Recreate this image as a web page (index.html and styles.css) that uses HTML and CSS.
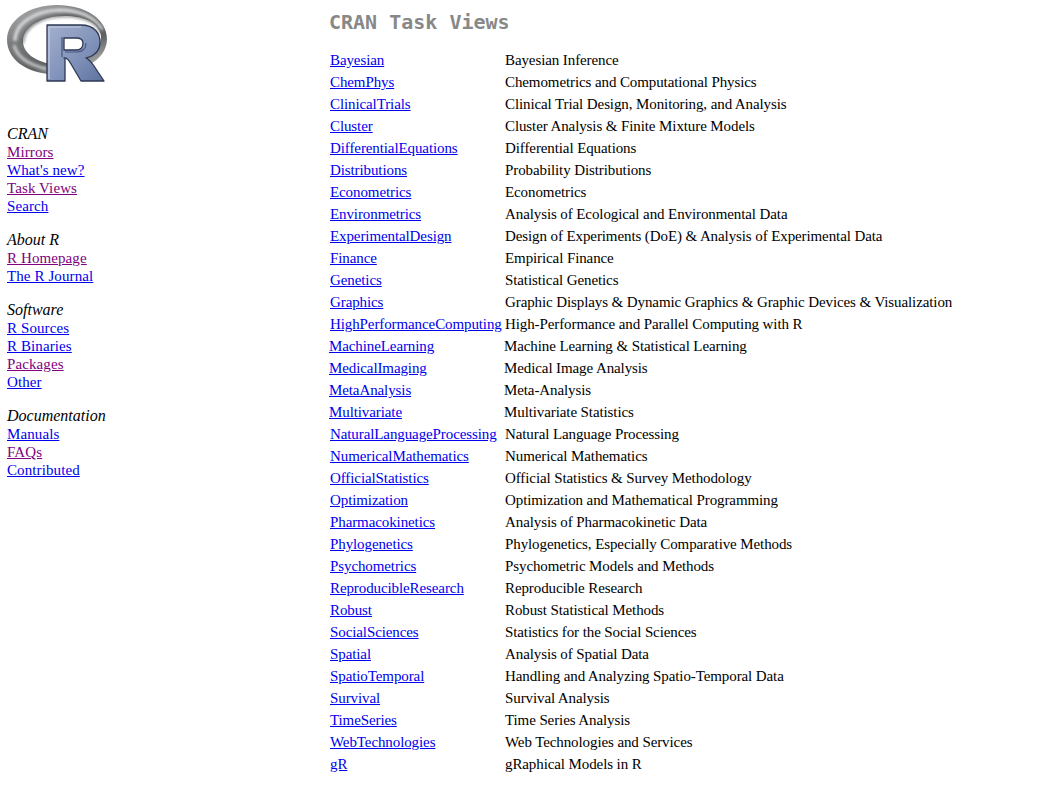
FILE: index.html
```html
<!DOCTYPE html>
<html lang="en">
<head>
    <meta charset="UTF-8">
    <title>CRAN Task Views</title>
    <link rel="stylesheet" href="styles.css">
</head>
<body>
    <div class="pagina">
        <div class="lateral">
            <svg class="logo" viewBox="0 0 100 78" width="100" height="78" role="img" aria-label="R logo">
                <defs>
                    <linearGradient id="anillo" x1="0" y1="0" x2="0.7" y2="1">
                        <stop offset="0" stop-color="#b4b5b8"/>
                        <stop offset="0.4" stop-color="#77797a"/>
                        <stop offset="0.75" stop-color="#5f6162"/>
                        <stop offset="1" stop-color="#a9abac"/>
                    </linearGradient>
                    <linearGradient id="letra" x1="0" y1="0" x2="1" y2="1">
                        <stop offset="0" stop-color="#a3b0ce"/>
                        <stop offset="0.6" stop-color="#7e90b8"/>
                        <stop offset="1" stop-color="#5d709e"/>
                    </linearGradient>
                    <filter id="suave" x="-10%" y="-10%" width="120%" height="120%">
                        <feGaussianBlur stdDeviation="1.4"/>
                    </filter>
                    <filter id="borde" x="-5%" y="-5%" width="110%" height="110%">
                        <feGaussianBlur stdDeviation="0.35"/>
                    </filter>
                </defs>
                <g filter="url(#borde)">
                    <path fill="url(#anillo)" fill-rule="evenodd" d="M50 0C22 0 0 15 0 35C0 53 18 68 44 69L44 59C28 56 16 48 16 36C16 22 34 11 58 11C80 11 94 20 94 32C94 42 87 50 76 54L82 60C93 54 100 45 100 34C100 14 78 0 50 0Z"/>
                    <path fill="none" stroke="#e4e5e6" stroke-width="3" filter="url(#suave)" d="M8 36C8 18 28 6 52 5C72 5 88 12 95 25"/>
                    <path fill="none" stroke="#dfe0e1" stroke-width="2.5" filter="url(#suave)" d="M7 40C10 52 22 60 40 64"/>
                    <path fill="none" stroke="#47494a" stroke-width="1.6" filter="url(#suave)" d="M16 38C16 22 34 11 58 11C76 11 90 17 94 28"/>
                    <path fill="url(#letra)" stroke="#2f3853" stroke-width="1.3" stroke-linejoin="round" fill-rule="evenodd" d="M40 20L74 20C88 20 93 29 93 37C93 46 87 51 79 53C83 55 85 58 87 61L97 76L74 76L64 59C61 54 60 53 57 53L58 53L58 76L40 76ZM57 33L57 45L69 45C74 45 76 42 76 38C76 35 74 33 69 33Z"/>
                    <path fill="none" stroke="#c3cde2" stroke-width="1.2" d="M42 74L42 22L74 22"/>
                    <path fill="none" stroke="#46557d" stroke-width="1.2" d="M55 32L55 52M58 47L70 47C77 47 79 42 79 38"/>
                </g>
            </svg>

            <div class="grupo">
                <em>CRAN</em>
                <a class="visto" href="#">Mirrors</a>
                <a href="#">What's new?</a>
                <a class="visto" href="#">Task Views</a>
                <a href="#">Search</a>
            </div>

            <div class="grupo">
                <em>About R</em>
                <a class="visto" href="#">R Homepage</a>
                <a href="#">The R Journal</a>
            </div>

            <div class="grupo">
                <em>Software</em>
                <a href="#">R Sources</a>
                <a href="#">R Binaries</a>
                <a class="visto" href="#">Packages</a>
                <a href="#">Other</a>
            </div>

            <div class="grupo">
                <em>Documentation</em>
                <a href="#">Manuals</a>
                <a class="visto" href="#">FAQs</a>
                <a href="#">Contributed</a>
            </div>
        </div>

        <div class="principal">
            <h1>CRAN Task Views</h1>
            <table class="vistas">
                <tr><td><a href="#">Bayesian</a></td><td>Bayesian Inference</td></tr>
                <tr><td><a href="#">ChemPhys</a></td><td>Chemometrics and Computational Physics</td></tr>
                <tr><td><a href="#">ClinicalTrials</a></td><td>Clinical Trial Design, Monitoring, and Analysis</td></tr>
                <tr><td><a href="#">Cluster</a></td><td>Cluster Analysis &amp; Finite Mixture Models</td></tr>
                <tr><td><a href="#">DifferentialEquations</a></td><td>Differential Equations</td></tr>
                <tr><td><a href="#">Distributions</a></td><td>Probability Distributions</td></tr>
                <tr><td><a href="#">Econometrics</a></td><td>Econometrics</td></tr>
                <tr><td><a href="#">Environmetrics</a></td><td>Analysis of Ecological and Environmental Data</td></tr>
                <tr><td><a href="#">ExperimentalDesign</a></td><td>Design of Experiments (DoE) &amp; Analysis of Experimental Data</td></tr>
                <tr><td><a href="#">Finance</a></td><td>Empirical Finance</td></tr>
                <tr><td><a href="#">Genetics</a></td><td>Statistical Genetics</td></tr>
                <tr><td><a href="#">Graphics</a></td><td>Graphic Displays &amp; Dynamic Graphics &amp; Graphic Devices &amp; Visualization</td></tr>
                <tr><td><a href="#">HighPerformanceComputing</a></td><td>High-Performance and Parallel Computing with R</td></tr>
                <tr class="corrida"><td><a href="#">MachineLearning</a></td><td>Machine Learning &amp; Statistical Learning</td></tr>
                <tr class="corrida"><td><a href="#">MedicalImaging</a></td><td>Medical Image Analysis</td></tr>
                <tr class="corrida"><td><a href="#">MetaAnalysis</a></td><td>Meta-Analysis</td></tr>
                <tr class="corrida"><td><a href="#">Multivariate</a></td><td>Multivariate Statistics</td></tr>
                <tr><td><a href="#">NaturalLanguageProcessing</a></td><td>Natural Language Processing</td></tr>
                <tr><td><a href="#">NumericalMathematics</a></td><td>Numerical Mathematics</td></tr>
                <tr><td><a href="#">OfficialStatistics</a></td><td>Official Statistics &amp; Survey Methodology</td></tr>
                <tr><td><a href="#">Optimization</a></td><td>Optimization and Mathematical Programming</td></tr>
                <tr><td><a href="#">Pharmacokinetics</a></td><td>Analysis of Pharmacokinetic Data</td></tr>
                <tr><td><a href="#">Phylogenetics</a></td><td>Phylogenetics, Especially Comparative Methods</td></tr>
                <tr><td><a href="#">Psychometrics</a></td><td>Psychometric Models and Methods</td></tr>
                <tr><td><a href="#">ReproducibleResearch</a></td><td>Reproducible Research</td></tr>
                <tr><td><a href="#">Robust</a></td><td>Robust Statistical Methods</td></tr>
                <tr><td><a href="#">SocialSciences</a></td><td>Statistics for the Social Sciences</td></tr>
                <tr><td><a href="#">Spatial</a></td><td>Analysis of Spatial Data</td></tr>
                <tr><td><a href="#">SpatioTemporal</a></td><td>Handling and Analyzing Spatio-Temporal Data</td></tr>
                <tr><td><a href="#">Survival</a></td><td>Survival Analysis</td></tr>
                <tr><td><a href="#">TimeSeries</a></td><td>Time Series Analysis</td></tr>
                <tr><td><a href="#">WebTechnologies</a></td><td>Web Technologies and Services</td></tr>
                <tr><td><a href="#">gR</a></td><td>gRaphical Models in R</td></tr>
            </table>
        </div>
    </div>
</body>
</html>
```

FILE: styles.css
```css
body {
    margin: 0;
    background-color: #ffffff;
    color: #000000;
    font-family: "Liberation Serif", "Times New Roman", serif;
    font-size: 15px;
    letter-spacing: -0.1px;
    line-height: 18px;
}

a {
    color: #0000ee;
}

.pagina {
    display: flex;
}

.lateral {
    width: 322px;
    flex-shrink: 0;
    box-sizing: border-box;
    padding: 5px 0 0 7px;
}

.logo {
    display: block;
    margin-bottom: 42px;
}

.grupo {
    margin-bottom: 16px;
}

.grupo em,
.grupo a {
    display: block;
    width: max-content;
}

.grupo a {
    letter-spacing: 0.1px;
}

.grupo em {
    font-size: 16px;
    letter-spacing: 0;
}

.grupo a.visto {
    color: #800080;
}

.principal {
    flex: 1;
    padding: 10px 0 0 7px;
}

h1 {
    margin: 0 0 14px;
    color: #888888;
    font-family: "DejaVu Sans Mono", monospace;
    font-size: 20px;
    letter-spacing: 0;
    line-height: 24px;
}

.vistas {
    border-spacing: 0 2px;
    border-collapse: separate;
}

.vistas td {
    padding: 1px 2px 1px 1px;
    white-space: nowrap;
}

.vistas td:first-child {
    width: 172px;
}

.vistas tr.corrida td {
    padding-left: 0;
    padding-right: 3px;
}
```
